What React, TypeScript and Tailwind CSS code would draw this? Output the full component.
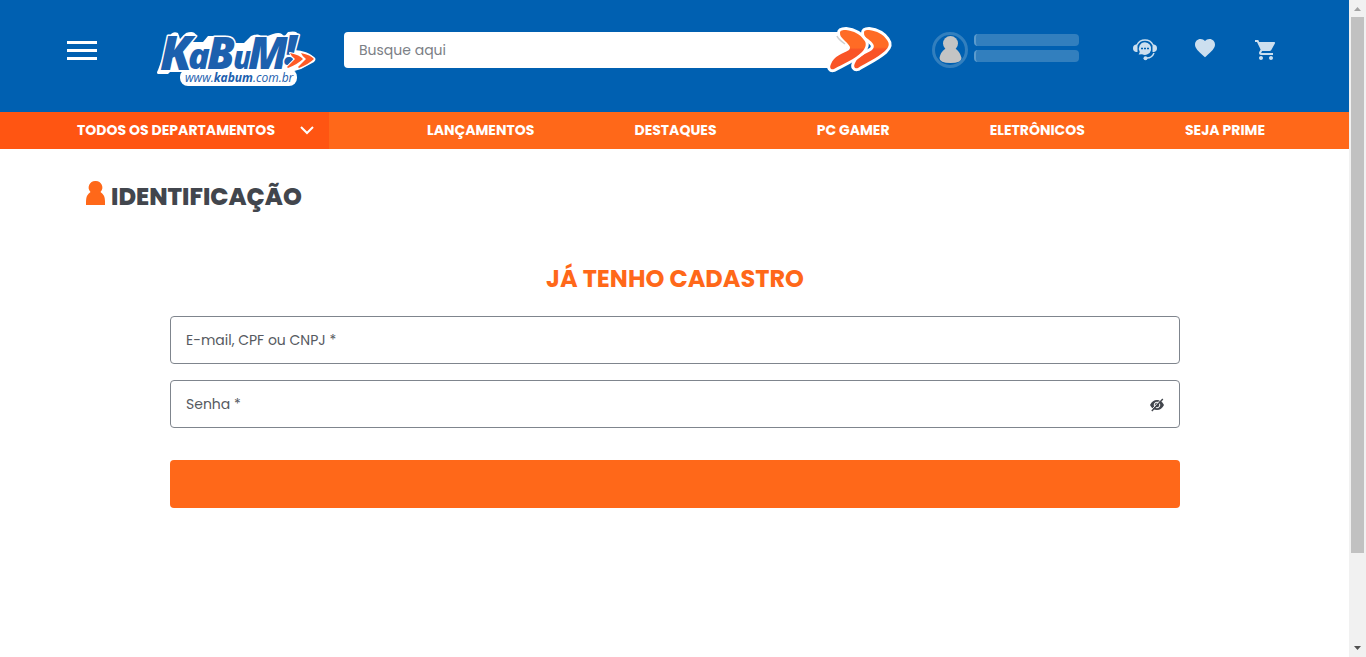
import { useState } from "react";

const links = ["LANÇAMENTOS", "DESTAQUES", "PC GAMER", "ELETRÔNICOS", "SEJA PRIME"];

function Logo() {
  return (
    <svg width="160" height="58" viewBox="0 0 160 58" className="overflow-visible" aria-label="KaBuM!" role="img">
      <path
        d="M2 41L9 22L15 5Q18 2 22 4L24 10L30 4Q38 1 40 6L36 13H47L52 7H72Q78 8 77 14H88L95 7Q104 3 106 9L117 5Q126 2 128 8L132 3Q143 1 142 7L138 21Q152 22 158 28Q161 30 158 33L145 40L135 43H14L12 45H2Q0 44 2 41Z"
        fill="#fff"
      />
      <rect x="24" y="40" width="117" height="17" rx="8" fill="#fff" />
      <g
        fontFamily="'Open Sans', 'Noto Sans', sans-serif"
        fontWeight="800"
        fontStyle="italic"
        fill="#1c60ae"
        stroke="#fff"
        strokeWidth="3"
        strokeLinejoin="round"
        paintOrder="stroke"
      >
        <text x="4" y="41" fontSize="48">K</text>
        <text x="32" y="40" fontSize="36">a</text>
        <text x="51" y="40" fontSize="44">B</text>
        <text x="77" y="40" fontSize="32">u</text>
        <text x="92" y="40" fontSize="44">M</text>
        <text x="128" y="36" fontSize="42">!</text>
      </g>
      <g fill="#ff5a26" stroke="#fff" strokeWidth="2" strokeLinejoin="round" paintOrder="stroke">
        <path d="M134 24q10 2 13 6q-5 5-15 9l-1-1l8-8q-4-3-5-6z" />
        <path d="M145 24q10 2 13 6q-5 5-15 9l-1-1l8-8q-4-3-5-6z" />
      </g>
      <text x="29" y="53" fontFamily="'Open Sans', sans-serif" fontSize="12" fontStyle="italic" fill="#1c60ae">
        www.<tspan fontWeight="700">kabum</tspan>.com.br
      </text>
    </svg>
  );
}

const leftArrow =
  "M12 5C12 2 15 2 18 2C26 3 32 6 36 12C39 15 38 20 34 24C27 31 15 36 6 41C3 42 1 40 3 36C6 28 14 26 21 22C24 19 20 16 16 12C13 9 12 8 12 5Z";
const rightArrow =
  "M36 5C36 2 38 2 41 2C49 3 55 6 59 12C62 16 61 19 57 23C49 30 38 35 30 40C27 41 25 39 27 35C30 28 38 26 44 22C48 18 45 15 40 11C37 9 36 8 36 5Z";

function SearchArrows() {
  return (
    <svg width="66" height="48" viewBox="0 -2 66 48" className="overflow-visible" aria-hidden="true">
      <defs>
        <linearGradient id="arrow" x1="0" y1="0" x2="0" y2="1">
          <stop offset="0.45" stopColor="#ff6b25" />
          <stop offset="0.5" stopColor="#f95427" />
        </linearGradient>
      </defs>
      <path d="M9 5L22 17L9 30Z" fill="#fff" />
      <path d={rightArrow} fill="#fff" stroke="#fff" strokeWidth="6" strokeLinejoin="round" />
      <path d={rightArrow} fill="url(#arrow)" />
      <path d={leftArrow} fill="#fff" stroke="#fff" strokeWidth="6" strokeLinejoin="round" />
      <path d="M9 8q1 3 8 8" fill="none" stroke="#cfcfcf" strokeWidth="1.500" />
      <path d={leftArrow} fill="url(#arrow)" />
    </svg>
  );
}

function Avatar() {
  return (
    <svg width="36" height="36" viewBox="0 0 36 36" aria-hidden="true">
      <circle cx="18" cy="18" r="16.5" fill="none" stroke="#327fbe" strokeWidth="3" />
      <g fill="#c4c4c4">
        <circle cx="18.5" cy="11.5" r="7.5" />
        <path d="M13 17h11q4 3 5.500 9q0 5-11 5t-11-5q1-6 5.500-9z" />
      </g>
    </svg>
  );
}

function Headset() {
  return (
    <svg width="24" height="24" viewBox="0 0 24 24" fill="#ccdfef" aria-hidden="true">
      <path d="M4 7a9 9 0 0 1 16 0M21 15q-2 5-7 5" fill="none" stroke="#ccdfef" strokeWidth="1.500" />
      <path d="M4.500 6.500v7.500H3q-3-.5-3-3.750T3 6.500zM19.500 6.500V14H21q3-.5 3-3.750T21 6.500z" />
      <path d="M12 4.300a6.300 6.300 0 1 1-3 11.900l-3.300.3l1.100-2.600A6.300 6.300 0 0 1 12 4.300z" />
      <circle cx="12.500" cy="20.300" r="2" />
      <path d="M8 9.700h2v1.600H8zm3 0h2v1.600h-2zm3 0h2v1.600h-2z" fill="#0060b1" />
    </svg>
  );
}

function Heart() {
  return (
    <svg width="24" height="24" viewBox="0 1 24 24" fill="#ccdfef" aria-hidden="true">
      <path d="M12 20.350l-1.450-1.320C5.400 14.360 2 11.280 2 7.500C2 4.420 4.420 2 7.500 2c1.740 0 3.410.81 4.500 2.090C13.090 2.810 14.760 2 16.500 2C19.580 2 22 4.420 22 7.500c0 3.780-3.400 6.860-8.550 11.540z" />
    </svg>
  );
}

function Cart() {
  return (
    <svg width="24" height="24" viewBox="-1 0 24 24" fill="#ccdfef" aria-hidden="true">
      <path d="M7 18c-1.100 0-1.990.9-1.990 2S5.900 22 7 22s2-.9 2-2-.9-2-2-2zM1 2v2h2l3.600 7.590-1.350 2.450c-.16.280-.25.610-.25.960 0 1.100.9 2 2 2h12v-2H7.420c-.14 0-.25-.11-.25-.25l.03-.12.9-1.630h7.450c.75 0 1.410-.41 1.750-1.030l3.580-6.490A1 1 0 0 0 20.010 4H5.210l-.94-2H1zm16 16c-1.100 0-1.990.9-1.990 2s.89 2 1.990 2 2-.9 2-2-.9-2-2-2z" />
    </svg>
  );
}

function HiddenEye() {
  return (
    <svg width="16" height="16" viewBox="0 -1 16 16" aria-hidden="true">
      <path d="M1 8q2.500-5 7-5t7 5q-2.500 5-7 5T1 8z" fill="#42464d" />
      <circle cx="8" cy="8" r="2.800" fill="#42464d" stroke="#fff" strokeWidth="1" />
      <path d="M1.800 13.500l11-12" stroke="#fff" strokeWidth="1" />
      <path d="M2.800 14l11-12" stroke="#42464d" strokeWidth="1.400" />
    </svg>
  );
}

function Header() {
  return (
    <header className="bg-[#0060b1] pb-3">
      <div className="flex h-[100px] items-center pr-[72px] pl-[67px]">
        <button type="button" aria-label="Menu" className="flex w-[30px] flex-col gap-[5px]">
          <span className="h-[3px] w-full bg-white" />
          <span className="h-[3px] w-full bg-white" />
          <span className="h-[3px] w-full bg-white" />
        </button>
        <a href="#" className="mt-4 ml-[59px] shrink-0">
          <Logo />
        </a>
        <form className="ml-7 flex min-w-0 flex-1 items-center" onSubmit={(e) => e.preventDefault()}>
          <input
            type="search"
            aria-label="Busque aqui"
            placeholder="Busque aqui"
            className="h-9 min-w-0 flex-1 rounded-l bg-white px-[15px] text-sm text-[#42464d] outline-none placeholder:text-[#7c8086]"
          />
          <button type="submit" aria-label="Buscar" className="-ml-3">
            <SearchArrows />
          </button>
        </form>
        <div className="ml-[38px] flex items-center gap-1.5">
          <Avatar />
          <div className="mb-1 flex w-[105px] flex-col gap-1">
            <div className="h-3 rounded border-l-2 border-[#5c9bcd] bg-[#327fbe]" />
            <div className="h-3 rounded border-l-2 border-[#5c9bcd] bg-[#327fbe]" />
          </div>
        </div>
        <nav aria-label="Conta" className="ml-[54px] flex items-center gap-9">
          <a href="#" aria-label="Atendimento"><Headset /></a>
          <a href="#" aria-label="Favoritos"><Heart /></a>
          <a href="#" aria-label="Carrinho"><Cart /></a>
        </nav>
      </div>
    </header>
  );
}

function DepartmentBar() {
  return (
    <nav aria-label="Departamentos" className="flex h-[37px] bg-[#ff6819] text-sm font-bold text-white">
      <button type="button" className="flex w-[329px] shrink-0 items-center justify-between bg-[#ff5512] pr-[15px] pb-0.5 pl-[77px]">
        TODOS OS DEPARTAMENTOS
        <svg width="14" height="10" viewBox="0 0 14 10" fill="none" aria-hidden="true">
          <path d="M1 2l6 6l6-6" stroke="#fff" strokeWidth="2" />
        </svg>
      </button>
      <div className="flex flex-1 items-center justify-between pr-[84px] pb-0.5 pl-[98px]">
        {links.map((label) => (
          <a key={label} href="#">{label}</a>
        ))}
      </div>
    </nav>
  );
}

function Login() {
  const [visible, setVisible] = useState(false);
  const field =
    "h-12 w-full rounded border border-[#7f858d] bg-white px-[15px] text-sm text-[#42464d] outline-none placeholder:text-[#565a61]";
  return (
    <main className="pt-[29px]">
      <h1 className="flex items-center gap-1.5 pl-[86px] text-2xl leading-[38px] font-extrabold text-[#42464d]">
        <svg width="19" height="26" viewBox="0 0 19 26" fill="#ff6819" className="mb-2" aria-hidden="true">
          <path d="M9.500 1a6.500 6.500 0 0 1 5 11q4.500 3 4.500 9v4H0v-4q0-6 4.500-9a6.500 6.500 0 0 1 5-11z" />
        </svg>
        IDENTIFICAÇÃO
      </h1>
      <form className="mr-[169px] ml-[170px] flex flex-col pt-[45px]" onSubmit={(e) => e.preventDefault()}>
        <h2 className="text-center text-2xl leading-9 font-bold text-[#ff6819]">JÁ TENHO CADASTRO</h2>
        <input
          type="text"
          aria-label="E-mail, CPF ou CNPJ"
          placeholder="E-mail, CPF ou CNPJ *"
          className={field + " mt-[19px]"}
        />
        <div className="relative mt-4">
          <input type={visible ? "text" : "password"} aria-label="Senha" placeholder="Senha *" className={field} />
          <button
            type="button"
            aria-label="Mostrar senha"
            onClick={() => setVisible(!visible)}
            className="absolute inset-y-0 right-[15px] flex items-center"
          >
            <HiddenEye />
          </button>
        </div>
        <button type="submit" aria-label="Entrar" className="mt-8 h-12 rounded bg-[#ff6819]" />
      </form>
    </main>
  );
}

function ScrollTrack() {
  return (
    <div className="flex w-[17px] shrink-0 flex-col items-center bg-[#f1f1f1]" aria-hidden="true">
      <svg width="17" height="17" viewBox="0 0 17 17" className="shrink-0">
        <path d="M5 11h7L8.500 7z" fill="#a3a3a3" />
      </svg>
      <div className="flex w-[13px] flex-1 flex-col">
        <div className="flex-[536] bg-[#c1c1c1]" />
        <div className="flex-[87]" />
      </div>
      <svg width="17" height="17" viewBox="0 0 17 17" className="shrink-0">
        <path d="M5 6h7L8.500 10z" fill="#505050" />
      </svg>
    </div>
  );
}

export default function App() {
  return (
    <div className="flex min-h-screen bg-white font-[Poppins,Inter,sans-serif]">
      <div className="min-w-0 flex-1">
        <Header />
        <DepartmentBar />
        <Login />
      </div>
      <ScrollTrack />
    </div>
  );
}
